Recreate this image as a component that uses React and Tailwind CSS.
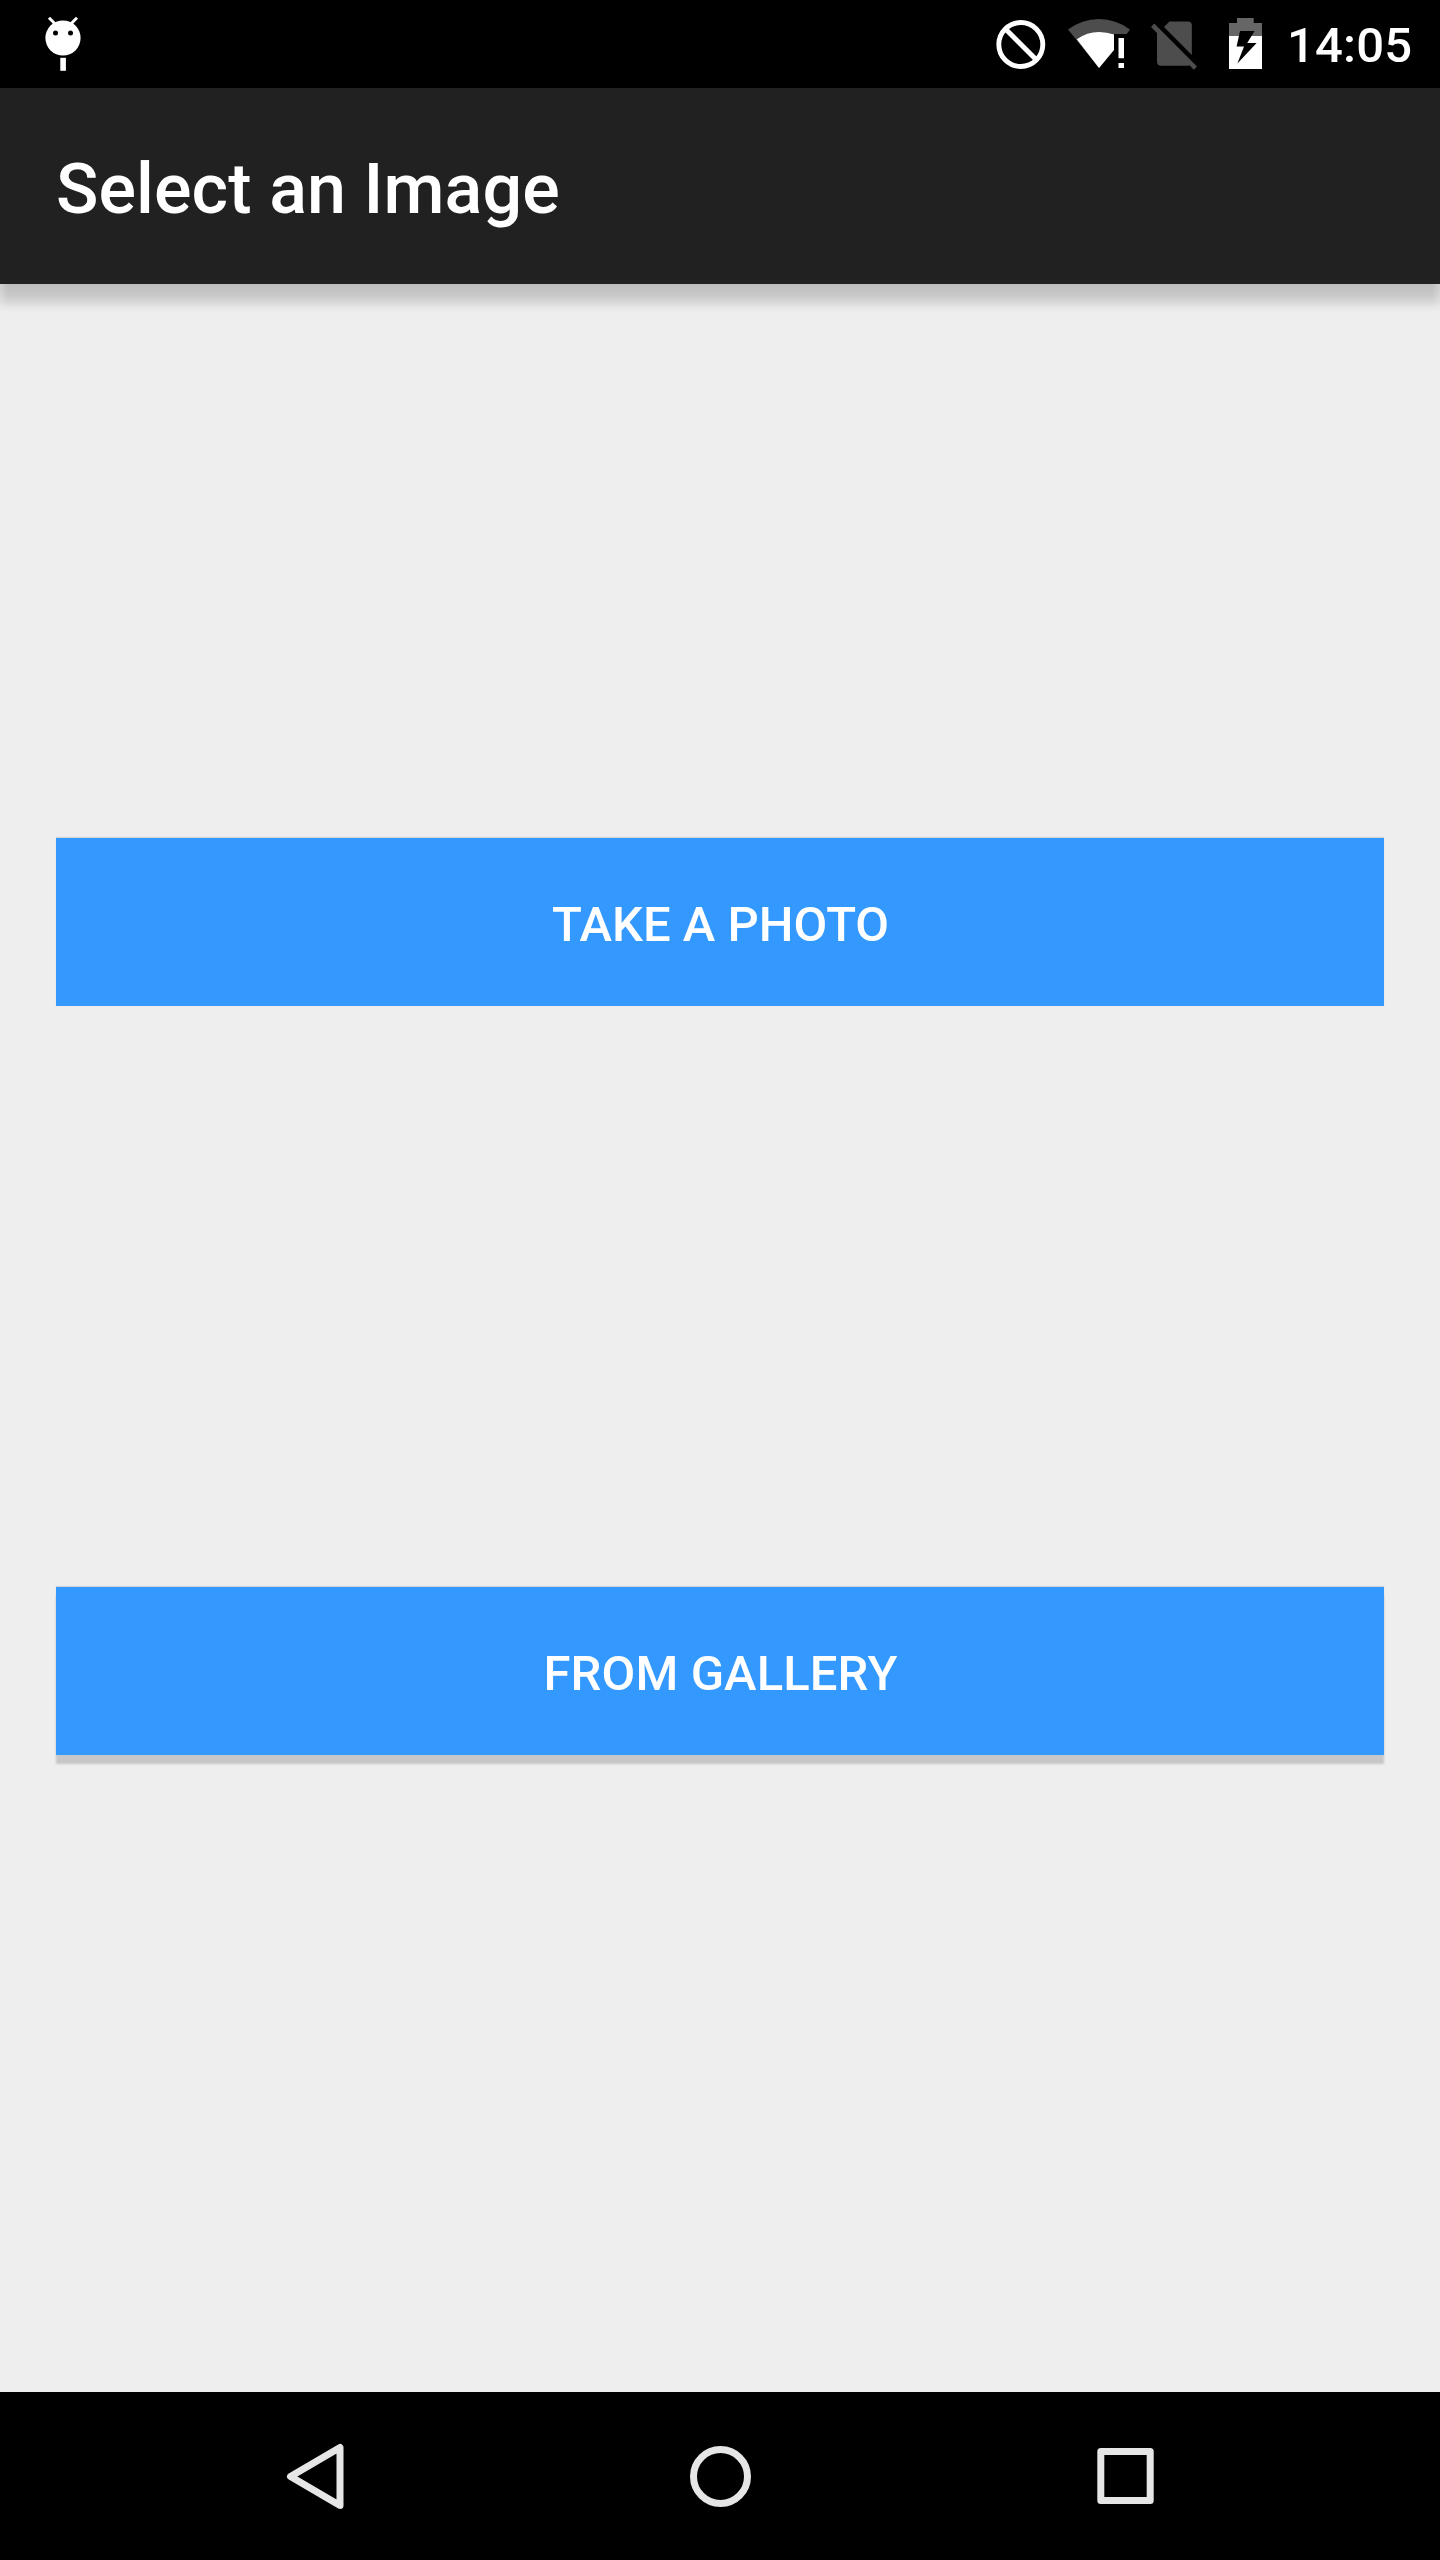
import React from "react";

function DebugIcon() {
  return (
    <svg className="h-14 w-9" viewBox="45 17 36 56">
      <circle cx="63" cy="39" r="17.6" fill="#fff" />
      <path d="M49 18.7l6 6M77 18.7l-6 6" stroke="#fff" strokeWidth="3" />
      <circle cx="55.5" cy="34" r="2.5" fill="#000" />
      <circle cx="70.5" cy="34" r="2.5" fill="#000" />
      <rect x="60.3" y="58.8" width="5.6" height="13" fill="#fff" />
    </svg>
  );
}

function BlockedIcon() {
  return (
    <svg className="h-[50px] w-[50px]" viewBox="995.5 19 50 50" fill="none" stroke="#fff" strokeWidth="4.9">
      <circle cx="1020.3" cy="44.5" r="22" />
      <path d="M1005 29l31 31" />
    </svg>
  );
}

function WifiIcon() {
  return (
    <svg className="ml-[22.5px] h-[50px] w-[62px]" viewBox="1068 19 62 50">
      <path d="M1068 29.6Q1082 19 1099 19T1130 29.6L1126.6 34H1114V50L1099 68Z" fill="#4d4d4d" />
      <path d="M1076.8 39.3Q1087 32 1099 32Q1107 32 1114 34.6V50L1099 68Z" fill="#fff" />
      <path d="M1118.5 38h5.5v20.3h-5.5zM1118.5 63h5.5v5h-5.5z" fill="#fff" />
    </svg>
  );
}

function NoSimIcon() {
  return (
    <svg className="mt-[2px] ml-[21px] h-[50px] w-[46px]" viewBox="1151 20 46 50" fill="#4d4d4d">
      <path d="M1164 27l5.5-5.5H1188q3.8 0 3.8 3.8V55z" />
      <path d="M1154.2 23.6l42.8 42.9-3.2 3.2-4.4-4.5q-.8.5-1.8.5H1161q-4 0-4-4V32.9L1151 26.9z" />
    </svg>
  );
}

function BatteryIcon() {
  return (
    <svg className="mb-[2px] ml-[32px] h-[52px] w-[33px]" viewBox="1229 17 33 52">
      <path d="M1229 36V23h8v-5h16.7v5h8.3v13z" fill="#666" />
      <path d="M1229 36h33v33h-33z" fill="#fff" />
      <path d="M1240 31h14.6l-7.4 12h9.4l-19.2 20.5 6.6-17h-7.4z" fill="#000" />
    </svg>
  );
}

function StatusBar() {
  return (
    <div className="flex h-[88px] items-center bg-black pr-[28px] pl-[45px] text-white">
      <DebugIcon />
      <div className="ml-auto flex items-center">
        <BlockedIcon />
        <WifiIcon />
        <NoSimIcon />
        <BatteryIcon />
        <span className="ml-[25px] w-[125px] pt-[3px] text-right text-[49px] leading-[56px] font-medium tracking-[0.2px] whitespace-nowrap">14:05</span>
      </div>
    </div>
  );
}

function ActionButton({ children, className }) {
  return (
    <button className={`block h-[168px] w-full bg-[#3399ff] pt-1 pl-px text-center text-[49px] leading-[57px] font-medium text-white ${className}`}>
      {children}
    </button>
  );
}

function NavBar() {
  return (
    <nav className="flex h-[168px] items-center justify-between bg-black pr-[285px] pl-[286px]">
      <svg className="h-[66px] w-[58px]" viewBox="286 2443 58 66" fill="none" stroke="#e6e6e6" strokeWidth="7" strokeLinejoin="round">
        <path d="M340 2447.5V2505.5L290.5 2476.5Z" />
      </svg>
      <svg className="h-[62px] w-[62px]" viewBox="0 0 62 62" fill="none" stroke="#e6e6e6" strokeWidth="7">
        <circle cx="30.5" cy="31.5" r="27" />
      </svg>
      <svg className="h-[58px] w-[58px]" viewBox="1097 2447 58 58" fill="none" stroke="#e6e6e6" strokeWidth="7" strokeLinejoin="round">
        <path d="M1100.8 2451.5H1150.2V2500.5H1100.8Z" />
      </svg>
    </nav>
  );
}

export default function App() {
  return (
    <div className="flex h-[2560px] w-[1440px] flex-col overflow-hidden bg-[#eeeeee] font-['Roboto',sans-serif]">
      <StatusBar />
      <header className="flex h-[196px] items-center bg-[#212121] px-14 pt-[6px] text-white">
        <h1 className="text-[70px] leading-[82px] font-medium tracking-[0.1px] whitespace-nowrap">Select an Image</h1>
      </header>
      <div className="flex h-7 justify-between bg-[linear-gradient(to_bottom,#bdbdbd_0px,#c8c8c8_11px,#d4d4d4_17px,#e5e5e5_23px,#eeeeee_28px)]">
        <div className="w-2 bg-linear-to-r from-[#eeeeee]/40 to-transparent" />
        <div className="w-2 bg-linear-to-l from-[#eeeeee]/40 to-transparent" />
      </div>
      <main className="flex flex-1 flex-col gap-[581px] px-14 pt-[526px]">
        <ActionButton className="shadow-[0_-1px_1px_rgba(0,0,0,0.1)]">TAKE A PHOTO</ActionButton>
        <ActionButton className="tracking-[0.1px] shadow-[0_-1px_1px_rgba(0,0,0,0.1),0_9px_2px_rgba(0,0,0,0.16)]">FROM GALLERY</ActionButton>
      </main>
      <NavBar />
    </div>
  );
}
